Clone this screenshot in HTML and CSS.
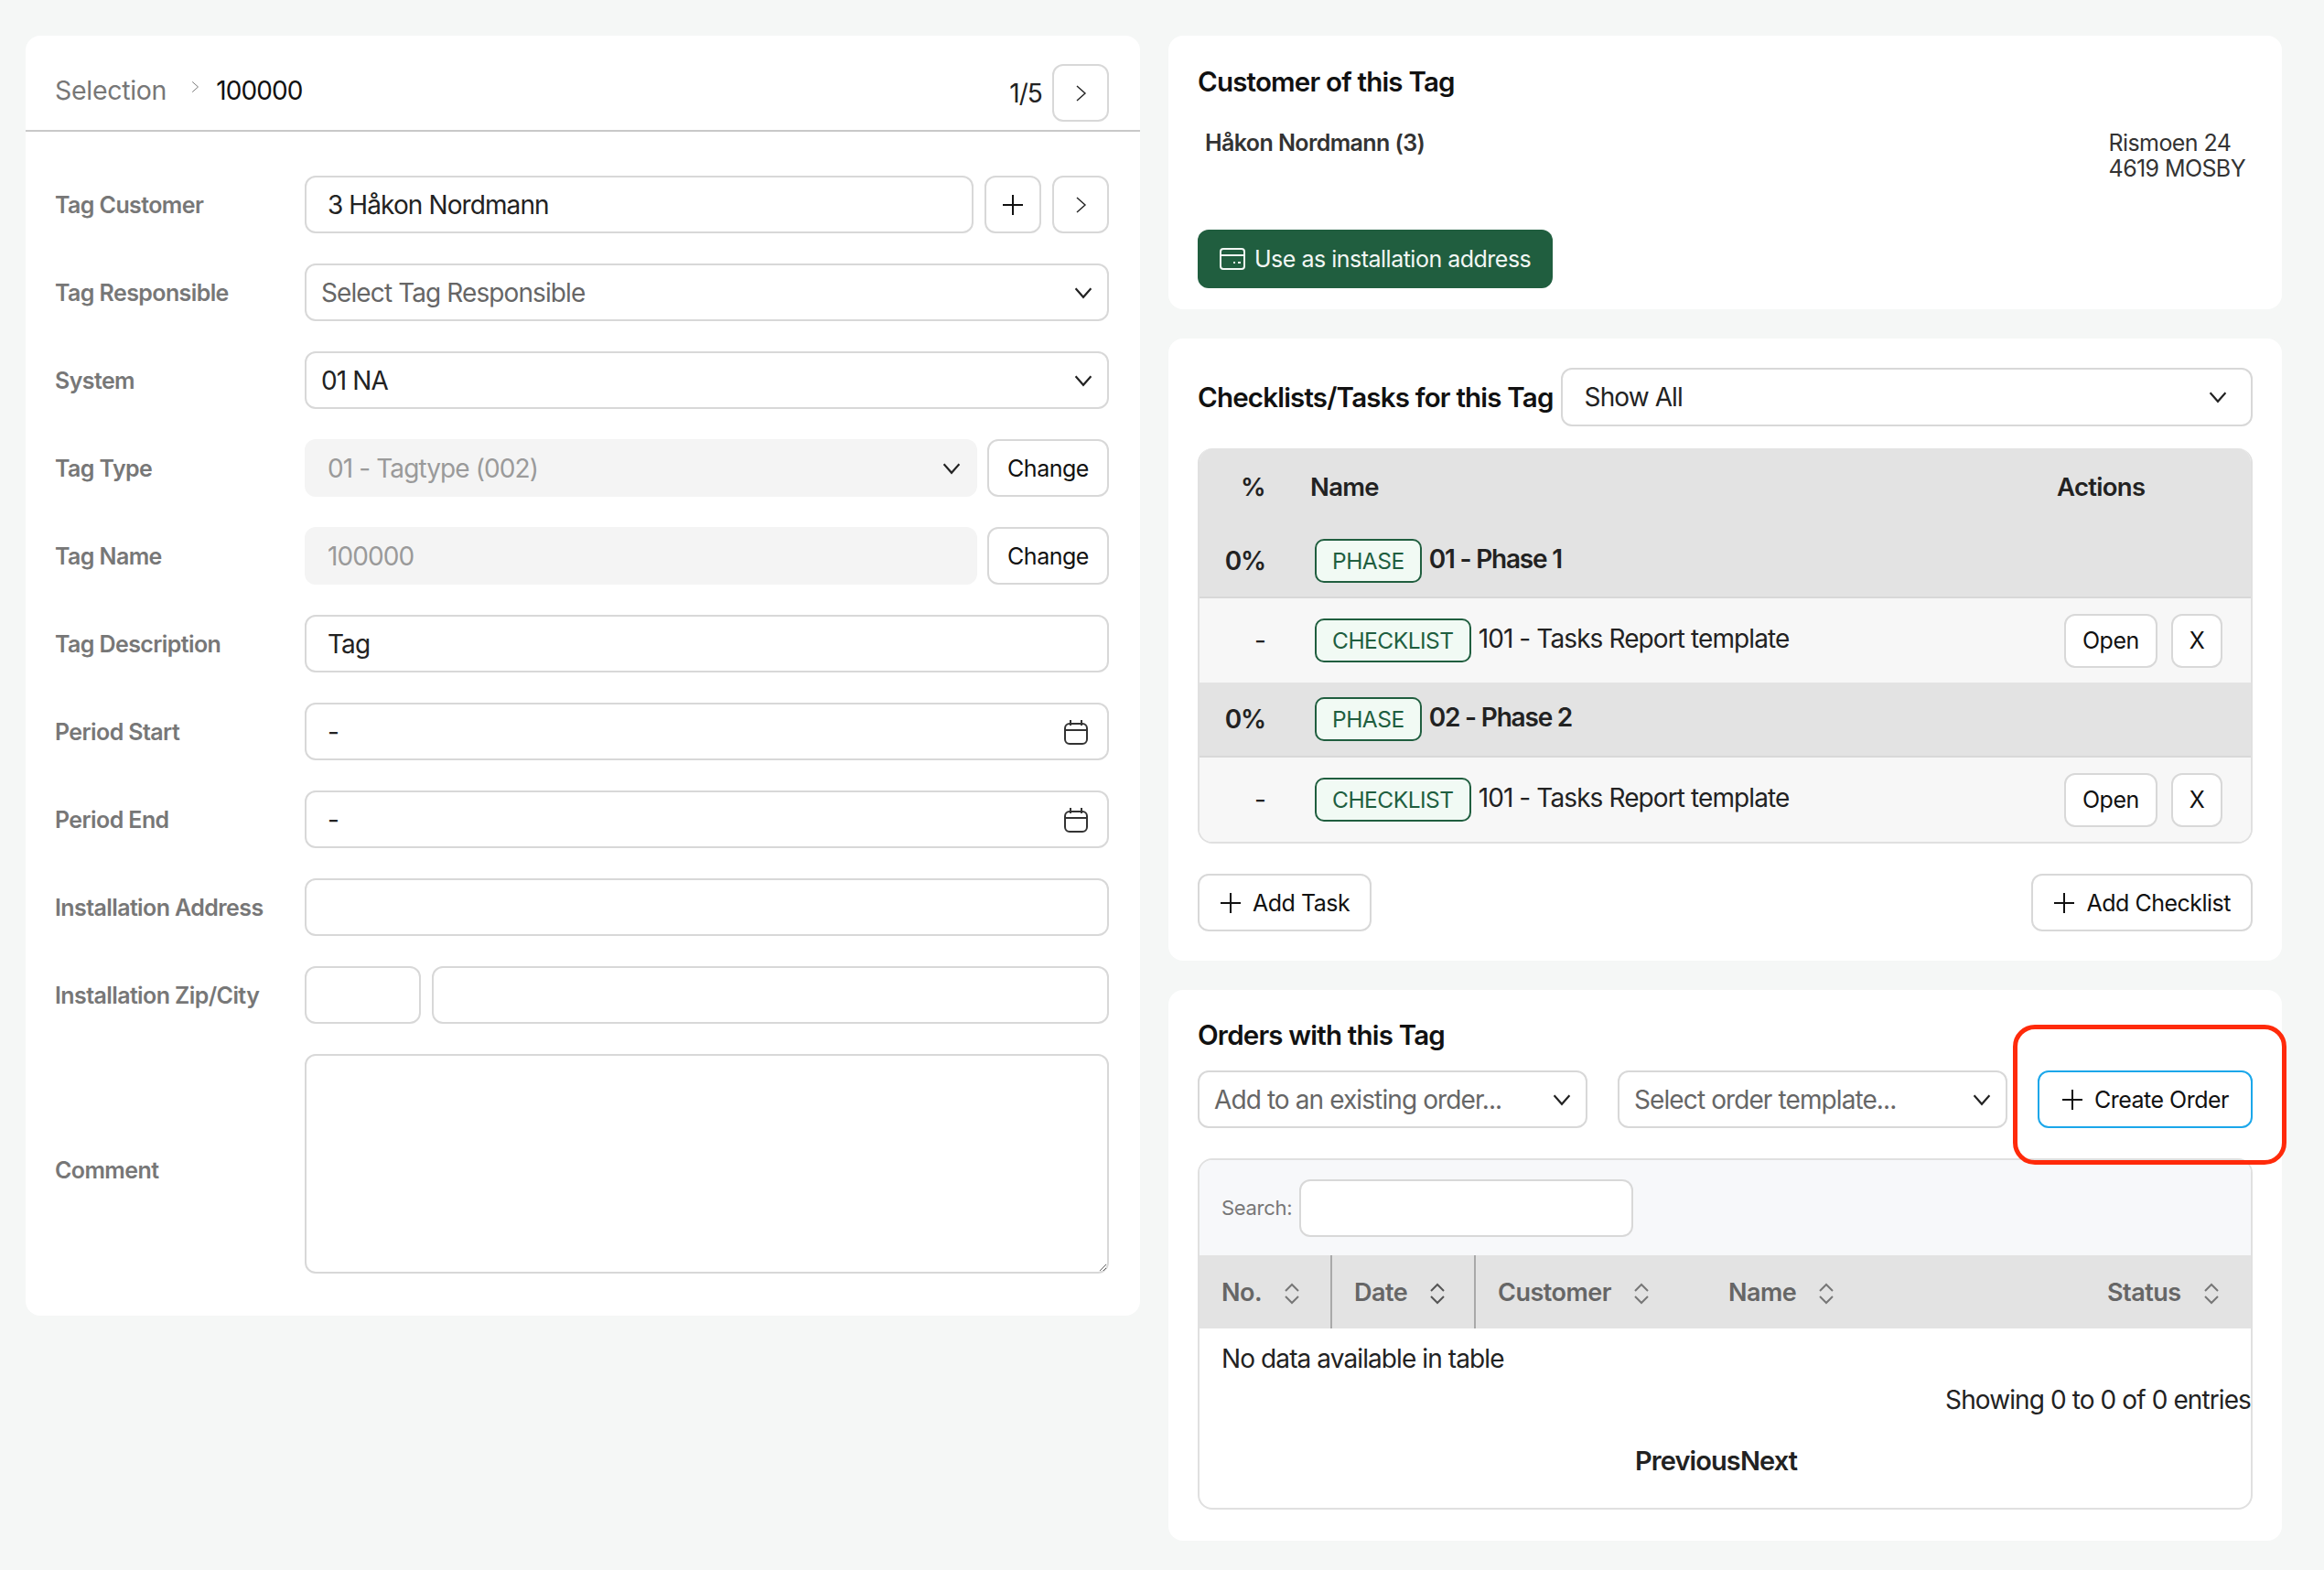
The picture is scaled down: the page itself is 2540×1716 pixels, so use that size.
FILE: index.html
```html
<!DOCTYPE html>
<html>
  <head>
    <title>Tag 100000</title>
    <link rel="stylesheet" href="styles.css">
  </head>
  <body>
    <svg class="defs" width="0" height="0">
      <symbol id="chev-down" viewBox="0 0 20 20"><path d="M3 6l7 8 7-8" fill="none" stroke="currentColor" stroke-width="1.8"/></symbol>
      <symbol id="chev-right" viewBox="0 0 20 20"><path d="M6 2l9 8-9 8" fill="none" stroke="currentColor" stroke-width="1.4"/></symbol>
      <symbol id="plus" viewBox="0 0 24 24"><path d="M12 1v22M1 12h22" fill="none" stroke="currentColor" stroke-width="2"/></symbol>
      <symbol id="calendar" viewBox="0 0 28 28"><rect x="2" y="5" width="24" height="22" rx="5" fill="none" stroke="currentColor" stroke-width="2"/><path d="M2 12h24M8 1v6M20 1v6" fill="none" stroke="currentColor" stroke-width="2"/></symbol>
      <symbol id="sort" viewBox="0 0 18 24"><path d="M2 9l7-7 7 7" fill="none" stroke="currentColor" stroke-width="2"/><path d="M2 15l7 7 7-7" fill="none" stroke="currentColor" stroke-width="2"/></symbol>
    </svg>

    <div class="page">
      <section class="card tag-card">
        <div class="crumbs">
          <span class="crumb-root">Selection</span>
          <svg class="crumb-sep"><use href="#chev-right"/></svg>
          <span class="crumb-now">100000</span>
          <span class="pager">1/5</span>
          <button class="btn square"><svg class="ico-chev"><use href="#chev-right"/></svg></button>
        </div>

        <div class="form">
          <div class="form-row">
            <label>Tag Customer</label>
            <div class="field grow pad-l">3 Håkon Nordmann</div>
            <button class="btn square"><svg class="ico-plus-big"><use href="#plus"/></svg></button>
            <button class="btn square"><svg class="ico-chev"><use href="#chev-right"/></svg></button>
          </div>
          <div class="form-row">
            <label>Tag Responsible</label>
            <div class="field grow muted">Select Tag Responsible<svg class="ico-down"><use href="#chev-down"/></svg></div>
          </div>
          <div class="form-row">
            <label>System</label>
            <div class="field grow">01 NA<svg class="ico-down"><use href="#chev-down"/></svg></div>
          </div>
          <div class="form-row">
            <label>Tag Type</label>
            <div class="field grow pad-l disabled">01 - Tagtype (002)<svg class="ico-down"><use href="#chev-down"/></svg></div>
            <button class="btn change">Change</button>
          </div>
          <div class="form-row">
            <label>Tag Name</label>
            <div class="field grow pad-l disabled">100000</div>
            <button class="btn change">Change</button>
          </div>
          <div class="form-row">
            <label>Tag Description</label>
            <div class="field grow pad-l">Tag</div>
          </div>
          <div class="form-row">
            <label>Period Start</label>
            <div class="field grow pad-l">-<svg class="ico-cal"><use href="#calendar"/></svg></div>
          </div>
          <div class="form-row">
            <label>Period End</label>
            <div class="field grow pad-l">-<svg class="ico-cal"><use href="#calendar"/></svg></div>
          </div>
          <div class="form-row">
            <label>Installation Address</label>
            <div class="field grow"></div>
          </div>
          <div class="form-row">
            <label>Installation Zip/City</label>
            <div class="field zip"></div>
            <div class="field grow"></div>
          </div>
          <div class="form-row comment-row">
            <label>Comment</label>
            <textarea class="comment"></textarea>
          </div>
        </div>
      </section>

      <div class="side">
        <section class="card customer-card">
          <h2>Customer of this Tag</h2>
          <div class="customer">
            <strong>Håkon Nordmann (3)</strong>
            <div class="address">Rismoen 24<br>4619 MOSBY</div>
          </div>
          <button class="btn-green">
            <svg class="ico-address" viewBox="0 0 28 24"><rect x="1" y="1" width="26" height="22" rx="3" fill="none" stroke="currentColor" stroke-width="2"/><path d="M1 8h26M15 16h2M20 16h3" fill="none" stroke="currentColor" stroke-width="2"/></svg>
            Use as installation address
          </button>
        </section>

        <section class="card tasks-card">
          <div class="tasks-head">
            <h2>Checklists/Tasks for this Tag</h2>
            <div class="field grow">Show All<svg class="ico-down"><use href="#chev-down"/></svg></div>
          </div>

          <div class="tasks-wrap">
            <table class="tasks">
              <thead>
                <tr>
                  <th class="pct">%</th>
                  <th>Name</th>
                  <th class="actions-head">Actions</th>
                </tr>
              </thead>
              <tbody>
                <tr class="phase first">
                  <td class="pct">0%</td>
                  <td><span class="badge">PHASE</span>01 - Phase 1</td>
                  <td></td>
                </tr>
                <tr class="check">
                  <td class="pct">-</td>
                  <td><span class="badge">CHECKLIST</span>101 - Tasks Report template</td>
                  <td class="actions"><button class="btn small">Open</button><button class="btn small">X</button></td>
                </tr>
                <tr class="phase">
                  <td class="pct">0%</td>
                  <td><span class="badge">PHASE</span>02 - Phase 2</td>
                  <td></td>
                </tr>
                <tr class="check last">
                  <td class="pct">-</td>
                  <td><span class="badge">CHECKLIST</span>101 - Tasks Report template</td>
                  <td class="actions"><button class="btn small">Open</button><button class="btn small">X</button></td>
                </tr>
              </tbody>
            </table>
          </div>

          <div class="tasks-foot">
            <button class="btn with-icon"><svg class="ico-plus"><use href="#plus"/></svg>Add Task</button>
            <button class="btn with-icon"><svg class="ico-plus"><use href="#plus"/></svg>Add Checklist</button>
          </div>
        </section>

        <section class="card orders-card">
          <h2>Orders with this Tag</h2>
          <div class="orders-tools">
            <div class="field order-select muted">Add to an existing order...<svg class="ico-down"><use href="#chev-down"/></svg></div>
            <div class="field order-select muted">Select order template...<svg class="ico-down"><use href="#chev-down"/></svg></div>
            <button class="btn with-icon create"><svg class="ico-plus"><use href="#plus"/></svg>Create Order</button>
          </div>
          <div class="highlight"></div>

          <div class="orders-box">
            <div class="search-bar">
              <label>Search:</label>
              <div class="search-input"></div>
            </div>
            <table class="orders">
              <thead>
                <tr>
                  <th class="c-no">No.<svg class="ico-sort"><use href="#sort"/></svg></th>
                  <th class="c-date">Date<svg class="ico-sort"><use href="#sort"/></svg></th>
                  <th class="c-customer">Customer<svg class="ico-sort"><use href="#sort"/></svg></th>
                  <th class="c-name">Name<svg class="ico-sort"><use href="#sort"/></svg></th>
                  <th class="c-status">Status<svg class="ico-sort"><use href="#sort"/></svg></th>
                </tr>
              </thead>
              <tbody>
                <tr><td colspan="5">No data available in table</td></tr>
              </tbody>
            </table>
            <div class="info">Showing 0 to 0 of 0 entries</div>
            <div class="paging"><b>Previous</b><b>Next</b></div>
          </div>
        </section>
      </div>
    </div>
  </body>
</html>
```

FILE: styles.css
```css
* {
  box-sizing: border-box;
}
body {
  margin: 0;
  background-color: #f5f7f6;
  font-family: Inter, "Liberation Sans", sans-serif;
  font-size: 28px;
  letter-spacing: -0.9px;
  color: #1c1c1c;
}
.defs {
  position: absolute;
}
.page {
  display: grid;
  grid-template-columns: 1218px 1217px;
  gap: 31px;
  align-items: start;
  padding: 39px 46px 32px 28px;
}
.card {
  background-color: #fff;
  border-radius: 16px;
}
.side {
  display: flex;
  flex-direction: column;
  gap: 32px;
}
h2 {
  margin: 0;
  font-size: 29.5px;
  font-weight: 600;
  letter-spacing: -0.8px;
  white-space: nowrap;
  color: #111;
}

/* buttons and fields */
.btn {
  display: inline-flex;
  align-items: center;
  justify-content: center;
  height: 63px;
  padding: 0;
  background-color: #fff;
  border: 2px solid #d8d8d8;
  border-radius: 12px;
  font-family: inherit;
  font-size: 25px;
  letter-spacing: -0.5px;
  color: #111;
}
.square {
  flex: none;
  width: 62px;
}
.change {
  flex: none;
  width: 133px;
  margin-left: -1px;
}
.field {
  display: flex;
  align-items: center;
  justify-content: space-between;
  height: 63px;
  padding: 0 14px 0 16px;
  background-color: #fff;
  border: 2px solid #d8d8d8;
  border-radius: 12px;
  color: #222;
}
.grow {
  flex: 1;
  min-width: 0;
}
.pad-l {
  padding-left: 23px;
}
.muted {
  color: #666;
}
.disabled {
  background-color: #f4f4f4;
  border-color: #f4f4f4;
  color: #9a9a9a;
}
.disabled svg {
  color: #222;
}
.ico-down {
  width: 24px;
  height: 24px;
  color: #222;
}
.ico-chev {
  width: 20px;
  height: 20px;
  color: #222;
}
.ico-plus-big {
  width: 24px;
  height: 24px;
}
.ico-plus {
  width: 24px;
  height: 24px;
  margin-right: 12px;
}
.ico-cal {
  width: 28px;
  height: 28px;
  margin-right: 6px;
  color: #333;
}

/* left card */
.tag-card {
  padding-bottom: 46px;
}
.crumbs {
  display: flex;
  align-items: center;
  height: 105px;
  padding: 22px 34px 0 32px;
  border-bottom: 2px solid #c8c8c8;
}
.crumb-root {
  margin-top: -6px;
  color: #777;
  font-size: 28.5px;
  letter-spacing: -0.3px;
}
.crumb-sep {
  width: 14px;
  height: 16px;
  margin: -14px 16px 0 24px;
  color: #777;
}
.crumb-now {
  margin-top: -6px;
  font-size: 28px;
  letter-spacing: -0.9px;
  color: #111;
}
.pager {
  margin-left: auto;
  margin-right: 11px;
  font-size: 28px;
  color: #222;
}
.form {
  display: flex;
  flex-direction: column;
  gap: 33px;
  padding: 48px 34px 0 32px;
}
.form-row {
  display: flex;
  align-items: center;
  gap: 12px;
}
.form-row label {
  flex: none;
  width: 261px;
  font-size: 25px;
  font-weight: 600;
  letter-spacing: -0.6px;
  color: #777;
}
.comment-row label {
  margin-top: 14px;
}
.zip {
  flex: none;
  width: 127px;
}
.comment {
  flex: 1;
  height: 240px;
  background-color: #fff;
  border: 2px solid #d8d8d8;
  border-radius: 12px;
  outline: none;
}

/* customer card */
.customer-card {
  height: 299px;
  padding: 32px;
}
.customer {
  display: flex;
  justify-content: space-between;
  height: 109px;
  margin-top: 35px;
  padding: 0 8px;
  font-size: 25px;
  line-height: 28px;
  letter-spacing: -0.6px;
}
.customer strong {
  font-weight: 600;
  color: #333;
}
.address {
  white-space: nowrap;
  color: #333;
}
.btn-green {
  display: inline-flex;
  align-items: center;
  height: 64px;
  padding: 0 24px;
  background-color: #205e3f;
  border: 0;
  border-radius: 12px;
  font-family: inherit;
  font-size: 25px;
  letter-spacing: -0.5px;
  color: #f2f7f4;
}
.ico-address {
  width: 28px;
  height: 24px;
  margin-right: 10px;
}

/* checklists */
.tasks-card {
  height: 680px;
  padding: 32px;
}
.tasks-head {
  display: flex;
  align-items: center;
  gap: 8px;
  height: 64px;
}
.tasks-head .field {
  height: 64px;
  padding: 0 24px;
}
.tasks-wrap {
  margin-top: 24px;
  border: 2px solid #e0e0e0;
  border-top: 0;
  border-radius: 16px;
  overflow: hidden;
}
.tasks {
  width: 100%;
  border-collapse: collapse;
  table-layout: fixed;
}
.tasks th,
.tasks td {
  padding: 0 0 0 16px;
}
.tasks th {
  height: 84px;
  padding-left: 11px;
  background-color: #e3e3e3;
  font-size: 27.5px;
  font-weight: 600;
  letter-spacing: -0.7px;
  text-align: left;
  color: #222;
}
.tasks .pct {
  width: 110px;
  padding: 0 38px 0 0;
  text-align: right;
}
.tasks .actions-head {
  width: 212px;
  padding-left: 0;
}
.tasks .actions {
  padding-left: 8px;
}
.phase td {
  height: 81px;
  background-color: #e3e3e3;
  border-bottom: 2px solid #d8d8d8;
  font-weight: 600;
  letter-spacing: -1.2px;
  color: #222;
}
.phase.first td {
  height: 79px;
}
.check td {
  height: 93px;
  background-color: #f7f7f7;
  color: #222;
}
.badge {
  display: inline-block;
  height: 48px;
  margin-right: 8px;
  padding: 0 17px;
  background-color: #f1faf4;
  border: 2px solid #205e3f;
  border-radius: 10px;
  font-size: 24.5px;
  font-weight: 400;
  line-height: 44px;
  letter-spacing: -0.5px;
  color: #205e3f;
  vertical-align: middle;
}
.small {
  height: 59px;
  padding: 0 18px;
  margin-left: 15px;
}
.small:first-child {
  margin-left: 0;
}
.actions {
  white-space: nowrap;
}
.tasks-foot {
  display: flex;
  justify-content: space-between;
  margin-top: 33px;
}
.with-icon {
  padding: 0 22px;
}

/* orders */
.orders-card {
  position: relative;
  height: 602px;
  padding: 32px;
}
.orders-card h2 {
  height: 34px;
  line-height: 34px;
}
.orders-tools {
  display: flex;
  gap: 33px;
  margin-top: 22px;
}
.order-select {
  flex: none;
  width: 426px;
}
.create {
  flex: 1;
  border-color: #1ba7ea;
}
.highlight {
  position: absolute;
  left: 923px;
  top: 38px;
  width: 299px;
  height: 153px;
  border: 5px solid #ff2a0a;
  border-radius: 24px;
  pointer-events: none;
}
.orders-box {
  height: 384px;
  margin-top: 33px;
  border: 2px solid #e0e0e0;
  border-radius: 16px;
  overflow: hidden;
}
.search-bar {
  display: flex;
  align-items: center;
  gap: 8px;
  height: 104px;
  padding-left: 24px;
  background-color: #f7f8fa;
}
.search-bar label {
  font-size: 22px;
  letter-spacing: -0.3px;
  color: #777;
}
.search-input {
  width: 365px;
  height: 63px;
  background-color: #fff;
  border: 2px solid #d8d8d8;
  border-radius: 12px;
}
.orders {
  width: 100%;
  border-collapse: collapse;
  table-layout: fixed;
}
.orders th {
  height: 80px;
  padding: 0 0 0 24px;
  background-color: #e3e3e3;
  font-size: 27px;
  font-weight: 600;
  letter-spacing: -0.5px;
  text-align: left;
  color: #666;
}
.c-no,
.c-date {
  border-right: 2px solid #a9a9a9;
}
.c-no {
  width: 144px;
}
.c-date {
  width: 157px;
}
.c-customer {
  width: 253px;
}
.c-name {
  width: 414px;
}
.ico-sort {
  width: 18px;
  height: 24px;
  margin-left: 24px;
  color: #777;
  vertical-align: middle;
}
.c-date .ico-sort {
  color: #555;
}
.orders td {
  height: 66px;
  padding: 0 0 0 24px;
  color: #222;
}
.info {
  margin-top: -4px;
  line-height: 32px;
  text-align: right;
  color: #222;
}
.paging {
  display: flex;
  justify-content: center;
  margin-top: 33px;
  padding-right: 20px;
  font-size: 29px;
  font-weight: 600;
  color: #222;
}
.paging b {
  font-weight: 600;
}
```
